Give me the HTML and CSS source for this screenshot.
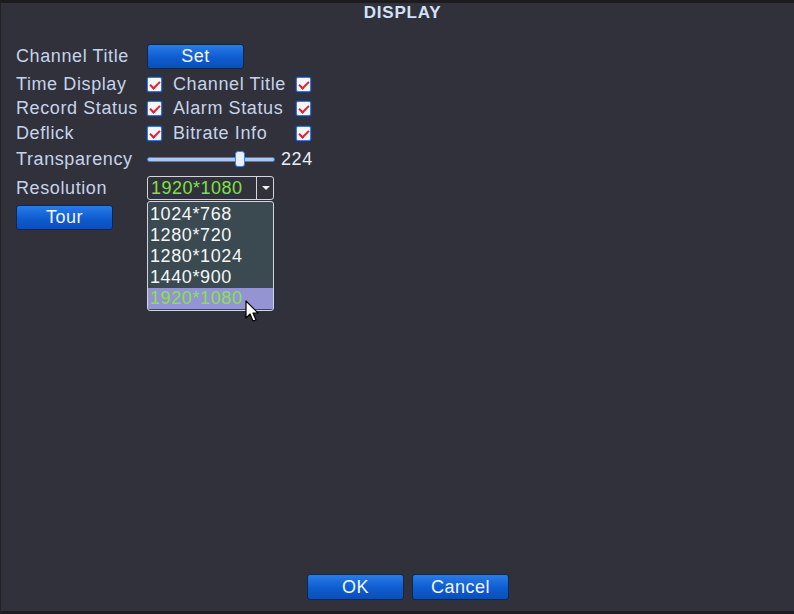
FILE: index.html
```html
<!DOCTYPE html>
<html>
<head>
<meta charset="utf-8">
<link rel="stylesheet" href="styles.css">
</head>
<body>
<div class="frame">
  <div class="title">DISPLAY</div>
  <div class="content">
    <div class="row r1">
      <span class="lbl c1">Channel Title</span>
      <button class="btn btn-set">Set</button>
    </div>
    <div class="row r2">
      <span class="lbl c1">Time Display</span>
      <span class="chk c2"></span>
      <span class="lbl c3">Channel Title</span>
      <span class="chk"></span>
    </div>
    <div class="row r3">
      <span class="lbl c1">Record Status</span>
      <span class="chk c2"></span>
      <span class="lbl c3">Alarm Status</span>
      <span class="chk"></span>
    </div>
    <div class="row r4">
      <span class="lbl c1">Deflick</span>
      <span class="chk c2"></span>
      <span class="lbl c3">Bitrate Info</span>
      <span class="chk"></span>
    </div>
    <div class="row r5">
      <span class="lbl c1">Transparency</span>
      <div class="slider"><div class="track"></div><div class="thumb"></div></div>
      <span class="lbl val">224</span>
    </div>
    <div class="row r6">
      <span class="lbl c1">Resolution</span>
      <div class="select">
        <span class="sel-text">1920*1080</span>
        <span class="sel-arrow"></span>
        <ul class="list">
          <li>1024*768</li>
          <li>1280*720</li>
          <li>1280*1024</li>
          <li>1440*900</li>
          <li class="active">1920*1080</li>
        </ul>
        <svg class="cursor" width="16" height="24" viewBox="0 0 16 24"><path d="M1 1 L1 18 L5 14 L8 21 L11 20 L8 13 L13 13 Z" fill="#fff" stroke="#000" stroke-width="1.2" stroke-linejoin="round"/></svg>
      </div>
    </div>
    <div class="row r7">
      <button class="btn btn-tour">Tour</button>
    </div>
  </div>
  <div class="footer">
    <button class="btn btn-foot">OK</button>
    <button class="btn btn-foot">Cancel</button>
  </div>
</div>
</body>
</html>
```
FILE: styles.css
```css
html, body {
  margin: 0;
  padding: 0;
  background: #31313b;
}
.frame {
  width: 794px;
  height: 614px;
  box-sizing: border-box;
  border-top: 3px solid #1c1c1f;
  border-bottom: 3px solid #1c1c1f;
  border-left: 1px solid #222226;
  display: flex;
  flex-direction: column;
  font-family: "Liberation Sans", Arial, sans-serif;
  font-size: 18px;
  letter-spacing: 0.6px;
  color: #c6d4ea;
}
.title {
  height: 19px;
  line-height: 19px;
  text-align: center;
  padding-left: 10px;
  color: #d4e2f6;
  font-size: 17px;
  font-weight: bold;
  letter-spacing: 0.8px;
}
.content {
  padding-top: 21px;
  padding-left: 15px;
  display: flex;
  flex-direction: column;
}
.row {
  display: flex;
  align-items: center;
}
.r1 { height: 26px; margin-bottom: 3px; }
.r2 { height: 24px; }
.r3 { height: 24px; margin-bottom: 1px; }
.r4 { height: 24px; margin-bottom: 2px; }
.r5 { height: 24px; margin-bottom: 5px; }
.r6 { height: 24px; margin-bottom: 5px; }
.r7 { height: 24px; }
.lbl { white-space: nowrap; }
.c1 { width: 131px; }
.c2 { margin-right: 11px; }
.c3 { width: 123px; }
.chk {
  width: 13px;
  height: 13px;
  border: 1px solid #3a78d8;
  border-radius: 2px;
  background: #f4f6fb;
  box-shadow: 0 0 0 1px #1a3c78;
  position: relative;
}
.chk::after {
  content: "";
  position: absolute;
  left: 4px;
  top: 1px;
  width: 4px;
  height: 8px;
  border-right: 2px solid #e0202a;
  border-bottom: 2px solid #e0202a;
  transform: rotate(45deg);
}
.btn {
  font-family: "Liberation Sans", Arial, sans-serif;
  font-size: 18px;
  letter-spacing: 0.5px;
  color: #f2f6ff;
  background: linear-gradient(#2a7ce8, #0e5cd0 55%, #0a4fb8);
  border: 1px solid #0c2850;
  border-radius: 3px;
  padding: 0;
  height: 25px;
  width: 97px;
  line-height: 22px;
}
.slider {
  width: 128px;
  height: 16px;
  position: relative;
  display: flex;
  align-items: center;
  margin-right: 6px;
}
.track {
  width: 100%;
  height: 3px;
  border: 1px solid #3a82dc;
  border-radius: 3px;
  background: #a8c8f0;
}
.thumb {
  position: absolute;
  left: 88px;
  top: 0;
  width: 8px;
  height: 14px;
  background: #e8f0ff;
  border: 1px solid #3a82dc;
  border-radius: 3px;
}
.val { color: #e8eef8; }
.select {
  width: 125px;
  height: 22px;
  border: 1px solid #d2d6dc;
  border-radius: 3px;
  position: relative;
  display: flex;
  align-items: center;
}
.sel-text {
  color: #80e044;
  padding-left: 3px;
  letter-spacing: 0.5px;
  flex: 1;
}
.sel-arrow {
  width: 16px;
  height: 22px;
  border-left: 1px solid #d2d6dc;
  position: relative;
}
.sel-arrow::after {
  content: "";
  position: absolute;
  left: 5px;
  top: 9px;
  border-left: 4px solid transparent;
  border-right: 4px solid transparent;
  border-top: 4px solid #f0f0f0;
}
.list {
  position: absolute;
  left: -1px;
  top: 24px;
  width: 125px;
  height: 106px;
  margin: 0;
  padding: 2px 0 0;
  list-style: none;
  background: #3a4a50;
  border: 1px solid #d2d6dc;
  border-radius: 3px;
  color: #f4f6f8;
  letter-spacing: 0.6px;
}
.list li {
  height: 21px;
  line-height: 21px;
  padding-left: 2px;
}
.list li.active {
  background: #9494d2;
  color: #86e44a;
}
.cursor {
  position: absolute;
  left: 97px;
  top: 123px;
}
.footer {
  margin-top: auto;
  padding-left: 306px;
  padding-bottom: 11px;
  display: flex;
  gap: 8px;
}
.btn-foot { width: 97px; height: 26px; }
```
